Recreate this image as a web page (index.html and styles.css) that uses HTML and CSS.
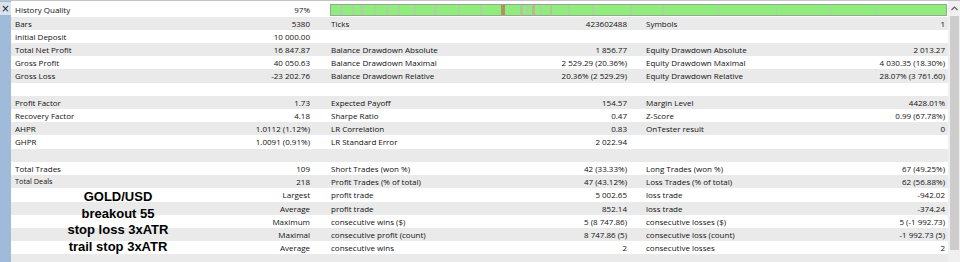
FILE: index.html
```html
<!DOCTYPE html>
<html>
<head>
<meta charset="utf-8">
<link rel="stylesheet" href="styles.css">
</head>
<body>
<div class="panel">
  <div class="side">
    <div class="close">×</div>
  </div>
  <div class="report">
    <div class="row">
      <div class="lbl">History Quality</div><div class="val">97%</div>
      <div class="quality">
        <svg width="617" height="12" viewBox="0 0 617 12" preserveAspectRatio="none">
          <rect x="0.5" y="0.5" width="616" height="11" fill="#8fee7b" stroke="#9aa59a"/>
          <g fill="#a6d79a">
            <rect x="10" y="1" width="3" height="10"/><rect x="22" y="1" width="2" height="10"/>
            <rect x="30" y="1" width="4" height="10"/><rect x="44" y="1" width="2" height="10"/>
            <rect x="56" y="1" width="3" height="10"/><rect x="68" y="1" width="2" height="10"/>
            <rect x="84" y="1" width="2" height="10"/><rect x="104" y="1" width="3" height="10"/>
            <rect x="128" y="1" width="2" height="10"/><rect x="150" y="1" width="2" height="10"/>
            <rect x="196" y="1" width="3" height="10"/><rect x="210" y="1" width="2" height="10"/>
            <rect x="238" y="1" width="2" height="10"/><rect x="262" y="1" width="2" height="10"/>
            <rect x="300" y="1" width="2" height="10"/><rect x="332" y="1" width="2" height="10"/>
            <rect x="388" y="1" width="1" height="10"/><rect x="446" y="1" width="1" height="10"/>
            <rect x="500" y="1" width="1" height="10"/><rect x="546" y="1" width="1" height="10"/>
          </g>
          <rect x="171" y="1" width="4" height="10" fill="#b39060"/>
          <rect x="190" y="1" width="3" height="10" fill="#b5c49a"/>
          <rect x="202" y="1" width="3" height="10" fill="#c2b496"/>
          <rect x="220" y="1" width="2" height="10" fill="#b5c49a"/>
        </svg>
      </div>
    </div>
    <div class="row">
      <div class="lbl">Bars</div><div class="val">5380</div>
      <div class="lbl">Ticks</div><div class="val">423602488</div>
      <div class="lbl">Symbols</div><div class="val">1</div>
    </div>
    <div class="row">
      <div class="lbl">Initial Deposit</div><div class="val">10 000.00</div>
      <div class="lbl"></div><div class="val"></div><div class="lbl"></div><div class="val"></div>
    </div>
    <div class="row">
      <div class="lbl">Total Net Profit</div><div class="val">16 847.87</div>
      <div class="lbl">Balance Drawdown Absolute</div><div class="val">1 856.77</div>
      <div class="lbl">Equity Drawdown Absolute</div><div class="val">2 013.27</div>
    </div>
    <div class="row">
      <div class="lbl">Gross Profit</div><div class="val">40 050.63</div>
      <div class="lbl">Balance Drawdown Maximal</div><div class="val">2 529.29 (20.36%)</div>
      <div class="lbl">Equity Drawdown Maximal</div><div class="val">4 030.35 (18.30%)</div>
    </div>
    <div class="row">
      <div class="lbl">Gross Loss</div><div class="val">-23 202.76</div>
      <div class="lbl">Balance Drawdown Relative</div><div class="val">20.36% (2 529.29)</div>
      <div class="lbl">Equity Drawdown Relative</div><div class="val">28.07% (3 761.60)</div>
    </div>
    <div class="row"></div>
    <div class="row">
      <div class="lbl">Profit Factor</div><div class="val">1.73</div>
      <div class="lbl">Expected Payoff</div><div class="val">154.57</div>
      <div class="lbl">Margin Level</div><div class="val">4428.01%</div>
    </div>
    <div class="row">
      <div class="lbl">Recovery Factor</div><div class="val">4.18</div>
      <div class="lbl">Sharpe Ratio</div><div class="val">0.47</div>
      <div class="lbl">Z-Score</div><div class="val">0.99 (67.78%)</div>
    </div>
    <div class="row">
      <div class="lbl">AHPR</div><div class="val">1.0112 (1.12%)</div>
      <div class="lbl">LR Correlation</div><div class="val">0.83</div>
      <div class="lbl">OnTester result</div><div class="val">0</div>
    </div>
    <div class="row">
      <div class="lbl">GHPR</div><div class="val">1.0091 (0.91%)</div>
      <div class="lbl">LR Standard Error</div><div class="val">2 022.94</div>
      <div class="lbl"></div><div class="val"></div>
    </div>
    <div class="row"></div>
    <div class="row">
      <div class="lbl">Total Trades</div><div class="val">109</div>
      <div class="lbl">Short Trades (won %)</div><div class="val">42 (33.33%)</div>
      <div class="lbl">Long Trades (won %)</div><div class="val">67 (49.25%)</div>
    </div>
    <div class="row">
      <div class="lbl small">Total Deals</div><div class="val">218</div>
      <div class="lbl">Profit Trades (% of total)</div><div class="val">47 (43.12%)</div>
      <div class="lbl">Loss Trades (% of total)</div><div class="val">62 (56.88%)</div>
    </div>
    <div class="row">
      <div class="lbl"></div><div class="val">Largest</div>
      <div class="lbl">profit trade</div><div class="val">5 002.65</div>
      <div class="lbl">loss trade</div><div class="val">-942.02</div>
    </div>
    <div class="row">
      <div class="lbl"></div><div class="val">Average</div>
      <div class="lbl">profit trade</div><div class="val">852.14</div>
      <div class="lbl">loss trade</div><div class="val">-374.24</div>
    </div>
    <div class="row">
      <div class="lbl"></div><div class="val">Maximum</div>
      <div class="lbl">consecutive wins ($)</div><div class="val">5 (8 747.86)</div>
      <div class="lbl">consecutive losses ($)</div><div class="val">5 (-1 992.73)</div>
    </div>
    <div class="row">
      <div class="lbl"></div><div class="val">Maximal</div>
      <div class="lbl">consecutive profit (count)</div><div class="val">8 747.86 (5)</div>
      <div class="lbl">consecutive loss (count)</div><div class="val">-1 992.73 (5)</div>
    </div>
    <div class="row">
      <div class="lbl"></div><div class="val">Average</div>
      <div class="lbl">consecutive wins</div><div class="val">2</div>
      <div class="lbl">consecutive losses</div><div class="val">2</div>
    </div>
    <div class="row"></div>
    <div class="note">GOLD/USD<br>breakout 55<br>stop loss 3xATR<br>trail stop 3xATR</div>
  </div>
  <div class="scrollbar">
    <div class="arrow">
      <svg width="7" height="5" viewBox="0 0 7 5"><path d="M0.5 4 L3.5 1 L6.5 4" fill="none" stroke="#606060" stroke-width="1.2"/></svg>
    </div>
    <div class="thumb"></div>
  </div>
</div>
</body>
</html>
```
FILE: styles.css
```css
html, body {
  margin: 0;
  padding: 0;
  background: #ffffff;
  overflow: hidden;
}
.panel {
  display: flex;
  width: 960px;
  height: 262px;
  font-family: "Open Sans", "Liberation Sans", sans-serif;
  font-size: 8px;
  color: #111111;
  border-top: 1px solid #c4c4c4;
  box-sizing: border-box;
}
.side {
  width: 11px;
  flex: none;
  background: #9fbbd9;
}
.close {
  height: 13px;
  margin-top: 1px;
  background: #d9e3ee;
  font-family: "DejaVu Sans", sans-serif;
  font-size: 10px;
  line-height: 13px;
  text-align: center;
  color: #202020;
}
.report {
  position: relative;
  width: 937px;
  flex: none;
  padding-top: 2.3px;
  overflow: hidden;
}
.row {
  display: grid;
  grid-template-columns: 149px 166px 150px 166px 150px 156px;
  height: 13.22px;
  line-height: 13.22px;
  white-space: nowrap;
}
.row:nth-child(even) {
  background: #eaeaea;
}
.lbl {
  padding-left: 4px;
}
.lbl:nth-child(3) {
  padding-left: 5px;
}
.lbl.small {
  font-size: 7.3px;
}
.val {
  text-align: right;
  padding-right: 16px;
}
.val:nth-child(4) {
  padding-right: 15px;
}
.val:nth-child(6) {
  padding-right: 3px;
}
.quality {
  grid-column: 3 / 7;
  display: flex;
  align-items: center;
  padding-left: 4px;
}
.quality svg {
  display: block;
}
.note {
  position: absolute;
  left: 0;
  top: 188px;
  width: 214px;
  text-align: center;
  font-family: "Liberation Sans", Arial, sans-serif;
  font-weight: bold;
  font-size: 13px;
  line-height: 16.7px;
  color: #000;
}
.scrollbar {
  flex: 1;
  background: #f0f0f0;
  display: flex;
  flex-direction: column;
  align-items: center;
}
.arrow {
  height: 15px;
  display: flex;
  align-items: center;
  justify-content: center;
}
.thumb {
  width: 9px;
  height: 234px;
  background: #cdcdcd;
}
```
